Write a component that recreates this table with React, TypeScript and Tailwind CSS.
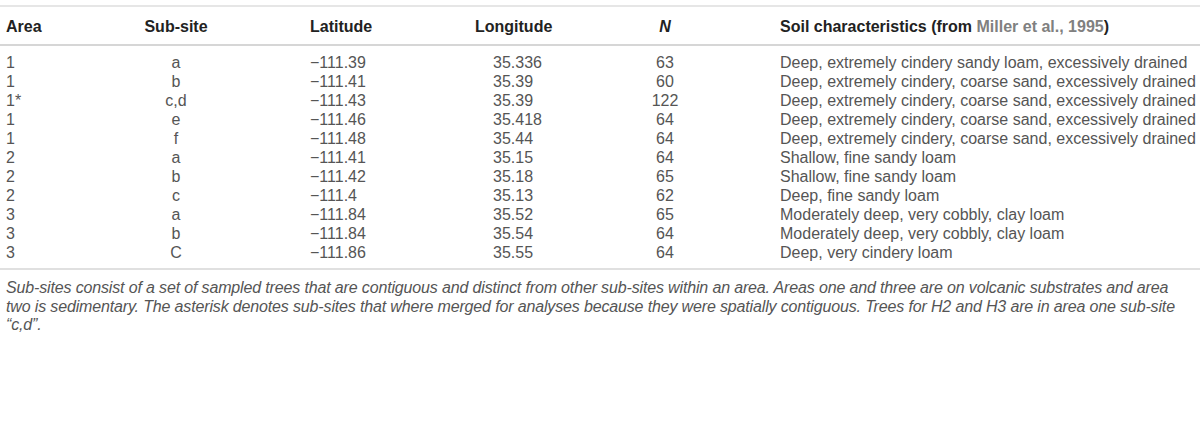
import React from "react";

const rows: [string, string, string, string, string, string][] = [
  ["1", "a", "\u2212111.39", "35.336", "63", "Deep, extremely cindery sandy loam, excessively drained"],
  ["1", "b", "\u2212111.41", "35.39", "60", "Deep, extremely cindery, coarse sand, excessively drained"],
  ["1*", "c,d", "\u2212111.43", "35.39", "122", "Deep, extremely cindery, coarse sand, excessively drained"],
  ["1", "e", "\u2212111.46", "35.418", "64", "Deep, extremely cindery, coarse sand, excessively drained"],
  ["1", "f", "\u2212111.48", "35.44", "64", "Deep, extremely cindery, coarse sand, excessively drained"],
  ["2", "a", "\u2212111.41", "35.15", "64", "Shallow, fine sandy loam"],
  ["2", "b", "\u2212111.42", "35.18", "65", "Shallow, fine sandy loam"],
  ["2", "c", "\u2212111.4", "35.13", "62", "Deep, fine sandy loam"],
  ["3", "a", "\u2212111.84", "35.52", "65", "Moderately deep, very cobbly, clay loam"],
  ["3", "b", "\u2212111.84", "35.54", "64", "Moderately deep, very cobbly, clay loam"],
  ["3", "C", "\u2212111.86", "35.55", "64", "Deep, very cindery loam"],
];

export default function App() {
  return (
    <div
      className="w-[1200px] h-[425px] bg-white pt-[5px] text-[16px]"
      style={{ fontFamily: '"Liberation Sans", Arial, sans-serif' }}
    >
      <div className="border-t-2 border-[#e6e6e6]">
        <div className="flex h-[39px] pt-[2px] items-center border-b-2 border-[#d6d6d6] font-bold text-[#222]">
          <div className="w-[120px] pl-[6px]">Area</div>
          <div className="w-[112px] text-center">Sub-site</div>
          <div className="w-[208px] pl-[78px]">Latitude</div>
          <div className="w-[160px] pl-[35px]">Longitude</div>
          <div className="w-[130px] text-center italic">N</div>
          <div className="pl-[50px]">
            Soil characteristics (from <span className="text-[#808080]">Miller et al., 1995</span>)
          </div>
        </div>
        <div className="pt-[7px] pb-[6px] border-b-2 border-[#e0e0e0] text-[#555]">
          {rows.map((r, i) => (
            <div key={i} className="flex h-[19px] items-center">
              <div className="w-[120px] pl-[6px]">{r[0]}</div>
              <div className="w-[112px] text-center">{r[1]}</div>
              <div className="w-[208px] pl-[78px]">{r[2]}</div>
              <div className="w-[160px] pl-[53px]">{r[3]}</div>
              <div className="w-[130px] text-center">{r[4]}</div>
              <div className="pl-[50px]">{r[5]}</div>
            </div>
          ))}
        </div>
      </div>
      <p className="pl-[6px] pr-[6px] pt-[9px] italic text-[#555] leading-[18.5px] tracking-[-0.15px]">
        Sub-sites consist of a set of sampled trees that are contiguous and distinct from other sub-sites within an area. Areas one and three are on volcanic substrates and area two is sedimentary. The asterisk denotes sub-sites that where merged for analyses because they were spatially contiguous. Trees for H2 and H3 are in area one sub&#8209;site {"\u201Cc,d\u201D"}.
      </p>
    </div>
  );
}
